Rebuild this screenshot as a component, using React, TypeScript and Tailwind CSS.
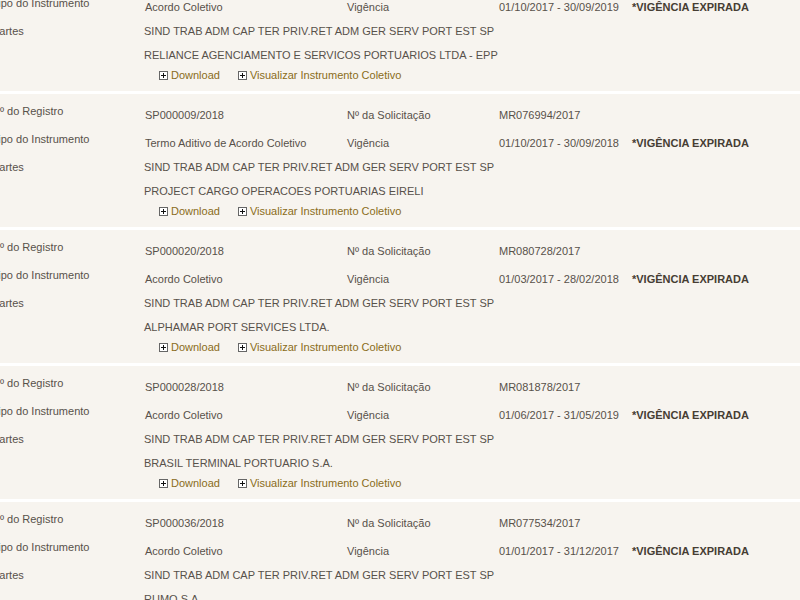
import React from "react";

type Registro = {
  registro: string;
  solicitacao: string;
  tipo: string;
  vigencia: string;
  partes: string[];
};

const registros: Registro[] = [
  {
    registro: "SP000002/2018",
    solicitacao: "MR070011/2017",
    tipo: "Acordo Coletivo",
    vigencia: "01/10/2017 - 30/09/2019",
    partes: [
      "SIND TRAB ADM CAP TER PRIV.RET ADM GER SERV PORT EST SP",
      "RELIANCE AGENCIAMENTO E SERVICOS PORTUARIOS LTDA - EPP",
    ],
  },
  {
    registro: "SP000009/2018",
    solicitacao: "MR076994/2017",
    tipo: "Termo Aditivo de Acordo Coletivo",
    vigencia: "01/10/2017 - 30/09/2018",
    partes: [
      "SIND TRAB ADM CAP TER PRIV.RET ADM GER SERV PORT EST SP",
      "PROJECT CARGO OPERACOES PORTUARIAS EIRELI",
    ],
  },
  {
    registro: "SP000020/2018",
    solicitacao: "MR080728/2017",
    tipo: "Acordo Coletivo",
    vigencia: "01/03/2017 - 28/02/2018",
    partes: [
      "SIND TRAB ADM CAP TER PRIV.RET ADM GER SERV PORT EST SP",
      "ALPHAMAR PORT SERVICES LTDA.",
    ],
  },
  {
    registro: "SP000028/2018",
    solicitacao: "MR081878/2017",
    tipo: "Acordo Coletivo",
    vigencia: "01/06/2017 - 31/05/2019",
    partes: [
      "SIND TRAB ADM CAP TER PRIV.RET ADM GER SERV PORT EST SP",
      "BRASIL TERMINAL PORTUARIO S.A.",
    ],
  },
  {
    registro: "SP000036/2018",
    solicitacao: "MR077534/2017",
    tipo: "Acordo Coletivo",
    vigencia: "01/01/2017 - 31/12/2017",
    partes: [
      "SIND TRAB ADM CAP TER PRIV.RET ADM GER SERV PORT EST SP",
      "RUMO S.A.",
    ],
  },
];

function PlusBox() {
  return (
    <span className="inline-flex items-center justify-center w-[9px] h-[9px] border border-[#666] bg-white shrink-0">
      <svg width="7" height="7" viewBox="0 0 7 7">
        <path d="M3.5 1v5M1 3.5h5" stroke="#111" strokeWidth="1" />
      </svg>
    </span>
  );
}

function Bloco({ r }: { r: Registro }) {
  return (
    <div className="border-t-[3px] border-white pt-[11px] pb-[9px]">
      {/* linha 1 */}
      <div className="flex h-[28px]">
        <div className="w-[153px] shrink-0">Nº do Registro</div>
        <div className="w-[202px] shrink-0 pt-[4px]">{r.registro}</div>
        <div className="w-[152px] shrink-0 pt-[4px]">Nº da Solicitação</div>
        <div className="pt-[4px]">{r.solicitacao}</div>
      </div>
      {/* linha 2 */}
      <div className="flex h-[28px]">
        <div className="w-[153px] shrink-0">Tipo do Instrumento</div>
        <div className="w-[202px] shrink-0 pt-[4px]">{r.tipo}</div>
        <div className="w-[152px] shrink-0 pt-[4px]">Vigência</div>
        <div className="w-[133px] shrink-0 pt-[4px]">{r.vigencia}</div>
        <div className="pt-[4px] font-bold text-[#463d33]">*VIGÊNCIA EXPIRADA</div>
      </div>
      {/* partes */}
      <div className="flex">
        <div className="w-[152px] shrink-0">Partes</div>
        <div className="flex flex-col">
          {r.partes.map((p) => (
            <div key={p} className="h-[24px]">
              {p}
            </div>
          ))}
        </div>
      </div>
      {/* links */}
      <div className="flex items-center h-[13px] -mt-[4px] pl-[167px] gap-[18px] text-[#8a6c20]">
        <a href="#" className="flex items-center gap-[3px]">
          <PlusBox />
          Download
        </a>
        <a href="#" className="flex items-center gap-[3px]">
          <PlusBox />
          Visualizar Instrumento Coletivo
        </a>
      </div>
    </div>
  );
}

export default function App() {
  return (
    <div className="w-[800px] h-[600px] overflow-hidden bg-[#f7f4ef] text-[#58514a] text-[11px] leading-[13px] font-['Liberation_Sans',Arial,sans-serif]">
      <div className="-mt-[45px] -ml-[8px]">
        {registros.map((r) => (
          <Bloco key={r.registro} r={r} />
        ))}
      </div>
    </div>
  );
}
